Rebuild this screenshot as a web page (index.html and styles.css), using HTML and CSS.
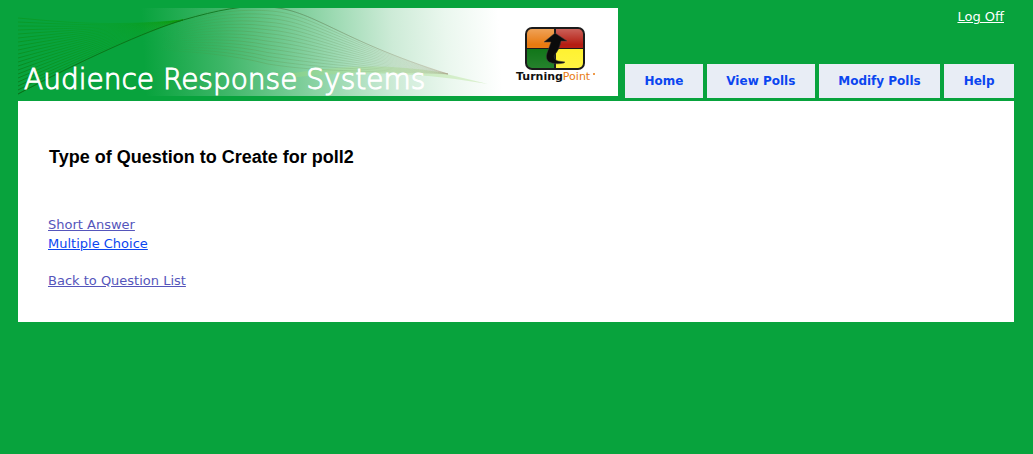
FILE: index.html
```
<!DOCTYPE html>
<html lang="en">
<head>
<meta charset="utf-8">
<title>Audience Response Systems</title>
<link rel="stylesheet" href="styles.css">
</head>
<body>
<header class="header">
  <svg class="banner" width="600" height="88" viewBox="0 0 600 88" role="img" aria-label="Audience Response Systems, TurningPoint">
    <defs>
      <linearGradient id="fade" gradientUnits="userSpaceOnUse" x1="124" y1="20" x2="480" y2="0">
        <stop offset="0" stop-color="#08a33d"/>
        <stop offset=".22" stop-color="#3db667"/>
        <stop offset=".43" stop-color="#7bcd98"/>
        <stop offset=".55" stop-color="#a0dbb5"/>
        <stop offset=".7" stop-color="#cdebd7"/>
        <stop offset=".85" stop-color="#eaf7ee"/>
        <stop offset="1" stop-color="#fff"/>
      </linearGradient>
      <linearGradient id="left-wave" gradientUnits="userSpaceOnUse" x1="0" y1="90" x2="60" y2="0">
        <stop offset="0" stop-color="#0a7018" stop-opacity=".9"/>
        <stop offset=".4" stop-color="#0a8a14" stop-opacity=".6"/>
        <stop offset="1" stop-color="#0a9a0a" stop-opacity=".25"/>
      </linearGradient>
      <linearGradient id="right-wave" gradientUnits="userSpaceOnUse" x1="140" y1="40" x2="430" y2="70">
        <stop offset="0" stop-color="#3f8f30" stop-opacity="0"/>
        <stop offset=".3" stop-color="#5a8f40" stop-opacity=".3"/>
        <stop offset=".6" stop-color="#6f9f68" stop-opacity=".3"/>
        <stop offset="1" stop-color="#a0a080" stop-opacity=".1"/>
      </linearGradient>
      <linearGradient id="edge" gradientUnits="userSpaceOnUse" x1="0" y1="0" x2="430" y2="0">
        <stop offset="0" stop-color="#0a6a18" stop-opacity=".6"/>
        <stop offset=".35" stop-color="#0b6b14" stop-opacity=".9"/>
        <stop offset=".52" stop-color="#0b6b14" stop-opacity=".7"/>
        <stop offset=".65" stop-color="#557f58" stop-opacity=".45"/>
        <stop offset="1" stop-color="#b08870" stop-opacity=".2"/>
      </linearGradient>
      <linearGradient id="shine" x1="0" y1="0" x2="0" y2="1">
        <stop offset="0" stop-color="#fff" stop-opacity=".3"/>
        <stop offset=".4" stop-color="#fff" stop-opacity="0"/>
        <stop offset="1" stop-color="#fff" stop-opacity=".1"/>
      </linearGradient>
      <clipPath id="tile"><rect x="509" y="21" width="56" height="39" rx="5"/></clipPath>
    </defs>
    <rect width="600" height="88" fill="url(#fade)"/>
    <path d="M270 66Q350 52 420 64L470 76Q370 58 270 70Z" fill="#a5dc80" opacity=".35"/>
    <g id="left-waves" class="waves" stroke="url(#left-wave)"></g>
    <g id="right-waves" class="waves" stroke="url(#right-wave)"></g>
    <path class="waves" stroke="url(#edge)" d="M0 86C60 54 130 22 165 12C200 2 225 -3 250 -1C295 1 320 32 430 66"/>
    <text class="banner-title" x="6" y="81">Audience Response Systems</text>
    <rect x="507" y="19" width="60" height="43" rx="7" fill="#1b1b1b"/>
    <g clip-path="url(#tile)">
      <path fill="#e87a10" d="M509 21h27v19h-27z"/>
      <path fill="#b51d12" d="M538 21h27v19h-27z"/>
      <path fill="#0d7415" d="M509 41h27v19h-27z"/>
      <path fill="#fff22d" d="M538 41h27v19h-27z"/>
      <path fill="url(#shine)" d="M509 21h27v19h-27zM538 21h27v19h-27zM509 41h27v19h-27zM538 41h27v19h-27z"/>
    </g>
    <path fill="#0b0b0b" stroke="#444" stroke-width=".5" d="M537 25L549 33L543 33Q542 41 536 48Q536 52 540 53L547 54L546 55Q537 57 531 54Q527 51 529 45L533 34L526 34Z"/>
    <text class="logo-name" x="498" y="72">Turning<tspan class="logo-accent">Point</tspan></text>
    <circle cx="576" cy="66" r="1" fill="#e87a10"/>
  </svg>
  <div class="side">
    <a class="logoff" href="#">Log Off</a>
    <nav class="nav">
      <a href="#">Home</a>
      <a href="#">View Polls</a>
      <a href="#">Modify Polls</a>
      <a href="#">Help</a>
    </nav>
  </div>
</header>
<main class="panel">
  <h1>Type of Question to Create for poll2</h1>
  <ul class="choices">
    <li><a class="visited" href="#">Short Answer</a></li>
    <li><a href="#">Multiple Choice</a></li>
  </ul>
  <a class="visited" href="#">Back to Question List</a>
</main>
<script src="waves.js"></script>
</body>
</html>
```
FILE: styles.css
```
body {
  margin: 8px 19px 8px 18px;
  background: #08a33d;
  font-family: Verdana, "DejaVu Sans", sans-serif;
  font-size: 13px;
  line-height: 19px;
}
a { color: #0b46f0; }
.header {
  display: flex;
  gap: 7px;
  margin-bottom: 3px;
}
.banner { flex: none; display: block; }
.waves { fill: none; stroke-width: 1; }
.banner-title {
  font-family: "DejaVu Sans", sans-serif;
  font-weight: 200;
  font-size: 28px;
  fill: #fff;
  stroke: #fff;
  stroke-width: 1;
}
.logo-name {
  font-family: "DejaVu Sans", sans-serif;
  font-size: 11px;
  font-weight: bold;
  fill: #111;
}
.logo-accent { fill: #e87a10; font-weight: normal; }
.side {
  flex: 1;
  display: flex;
  flex-direction: column;
  justify-content: space-between;
  height: 90px;
}
.logoff { color: #fff; margin-right: 10px; align-self: flex-end; line-height: 17px; }
.nav { display: flex; gap: 4px; }
.nav a {
  flex: auto;
  padding: 8px 18px;
  background: #e8edf5;
  font-size: 12px;
  line-height: 18px;
  font-weight: bold;
  text-align: center;
  text-decoration: none;
  white-space: nowrap;
}
.panel {
  background: #fff;
  padding: 44px 30px 32px;
}
h1 {
  margin: 0 0 46px 1px;
  font: bold 18px/24px "Liberation Sans", Arial, sans-serif;
  color: #000;
}
.choices {
  list-style: none;
  margin: 0 0 18px;
  padding: 0;
}
.visited { color: #5555bb; }
```
FILE: waves.js
```
function drawWaves(id, count, shape) {
  const group = document.getElementById(id);
  for (let i = 0; i < count; i++) {
    const path = document.createElementNS('http://www.w3.org/2000/svg', 'path');
    path.setAttribute('d', shape(i / (count - 1)));
    group.appendChild(path);
  }
}

drawWaves('left-waves', 20, t =>
  `M0 ${86 - 76 * t}C${60 - 15 * t} ${54 - 40 * t} ${120 - 30 * t} ${27 - 8 * t} 165 12`);

drawWaves('right-waves', 16, t =>
  `M140 ${20 + 22 * t}C180 ${4 + 40 * t} 215 ${-3 + 50 * t} 250 ${-1 + 57 * t}` +
  `C295 ${1 + 62 * t} 320 ${32 + 30 * t} 430 66`);
```
